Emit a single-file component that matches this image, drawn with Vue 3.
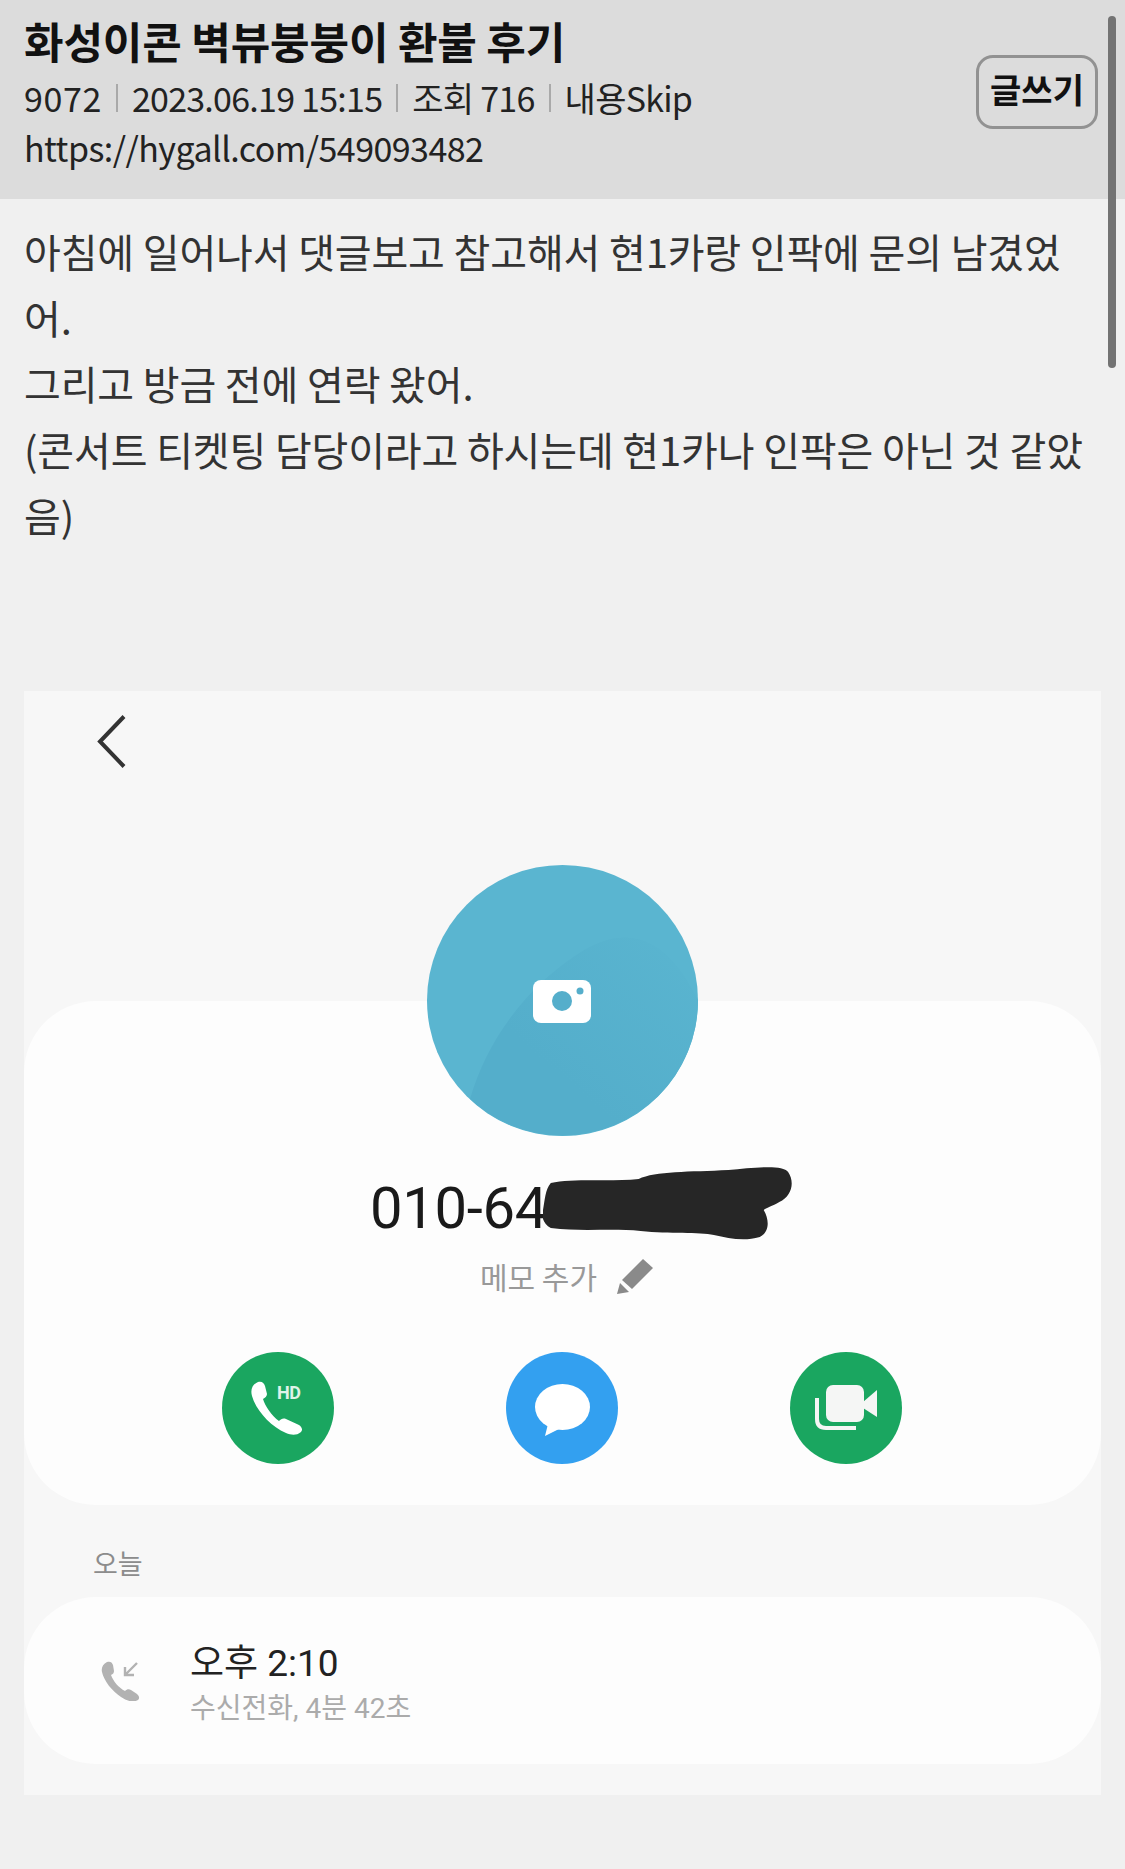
<script setup>
const metaItems = ['9072', '2023.06.19 15:15', '조회 716', '내용Skip']
</script>

<template>
  <div class="page">
    <header class="head">
      <div class="head-text">
        <h1 class="title">화성이콘 벽뷰붕붕이 환불 후기</h1>
        <div class="meta">
          <template v-for="(m, i) in metaItems" :key="m">
            <i v-if="i" class="sep"></i><span>{{ m }}</span>
          </template>
        </div>
        <div class="url">https://hygall.com/549093482</div>
      </div>
      <button class="write">글쓰기</button>
    </header>
    <div class="thumb"></div>

    <article class="body">
      <p>아침에 일어나서 댓글보고 참고해서 현1카랑 인팍에 문의 남겼었어.</p>
      <p>그리고 방금 전에 연락 왔어.</p>
      <p>(콘서트 티켓팅 담당이라고 하시는데 현1카나 인팍은 아닌 것 같았음)</p>
    </article>

    <section class="screen">
      <svg class="back" width="30" height="53" viewBox="0 0 30 53"><path d="M27 1.5 3 26.5 27 51.5" fill="none" stroke="#333" stroke-width="4"/></svg>
      <div class="avatar">
        <svg width="271" height="271" viewBox="0 0 271 271">
          <defs>
            <linearGradient id="swoop" x1="0" y1="1" x2="1" y2="0">
              <stop offset="0.35" stop-color="#54aecb"/>
              <stop offset="1" stop-color="#5ab5d0"/>
            </linearGradient>
          </defs>
          <circle cx="135.5" cy="135.5" r="135.5" fill="#5ab5d0"/>
          <path d="M43 234C60 175 100 120 157 85C200 60 240 70 271 135.5A135.5 135.5 0 0 1 43 234Z" fill="url(#swoop)"/>
          <rect x="106" y="115" width="58" height="43" rx="8" fill="#fff"/>
          <circle cx="135" cy="136" r="10" fill="#55aecb"/>
          <circle cx="153" cy="126" r="3.5" fill="#55aecb"/>
        </svg>
      </div>
      <div class="card main">
        <div class="number">
          <span class="digits">010-64</span>
          <svg class="blot" width="250" height="76" viewBox="0 0 256 76" preserveAspectRatio="none"><path d="M8 17C30 12 70 16 98 13C115 5 150 6 190 4C215 2 245-2 251 6C258 16 255 30 242 36C235 40 228 42 226 44C232 54 232 66 222 71C205 76 190 72 175 69C160 66 130 68 100 65C70 62 40 66 8 62C0 58-2 50 0 44C2 34 2 24 8 17Z" fill="#262626"/></svg>
        </div>
        <div class="memo">
          <span>메모 추가</span>
          <svg width="37" height="36" viewBox="0 0 37 36"><path d="M26 1 36 10 15 31 5 22Z" fill="#8a8a8a"/><path d="M3 25 12 34 0 36Z" fill="#8a8a8a"/></svg>
        </div>
        <div class="actions">
          <div class="action green">
            <svg width="112" height="112" viewBox="0 0 112 112">
              <path d="M36 30C40 29 42 31 43 34L45 42C45 44 43 46 41 47C43 54 50 64 57 69C59 67 61 66 64 67L77 73C80 75 81 78 79 80C74 84 69 83 64 81C48 74 34 58 30 44C28 37 31 32 36 30Z" fill="#fff"/>
              <text x="55" y="47" class="hd">HD</text>
            </svg>
          </div>
          <div class="action blue">
            <svg width="112" height="112" viewBox="0 0 112 112">
              <ellipse cx="56.5" cy="55" rx="27.5" ry="23" fill="#fff"/>
              <path d="M42 72 39 84 53 77Z" fill="#fff"/>
            </svg>
          </div>
          <div class="action green">
            <svg width="112" height="112" viewBox="0 0 112 112">
              <rect x="36" y="33" width="38" height="37" rx="7" fill="#f5f6f5"/>
              <path d="M73 50 87 38V65L73 56Z" fill="#f5f6f5"/>
              <path d="M27 46V67Q27 76 36 76H66" fill="none" stroke="#f5f6f5" stroke-width="4"/>
            </svg>
          </div>
        </div>
      </div>
      <div class="day">오늘</div>
      <div class="card log">
        <svg class="log-icon" width="40" height="40" viewBox="0 0 40 40">
          <path d="M6 1C9 0 11 1 12 4L13 10C13 12 12 13 10 14C12 20 18 27 24 30C26 28 28 28 30 29L36 33C38 35 39 37 37 39C32 42 26 40 20 36C11 30 3 20 1 11C0 7 2 3 6 1Z" fill="#b2b2b2"/>
          <path d="M36 2 24 14M24 6V14H33" fill="none" stroke="#b2b2b2" stroke-width="2.4"/>
        </svg>
        <div class="log-text">
          <div class="time">오후 2:10</div>
          <div class="dur">수신전화, 4분 42초</div>
        </div>
      </div>
    </section>
  </div>
</template>

<style>
html, body { margin: 0; background: #f0f0f0; }
</style>

<style scoped>
.page {
  position: relative;
  width: 1125px;
  height: 1869px;
  overflow: hidden;
  background: #f0f0f0;
  font-family: "Noto Sans CJK KR", "Noto Sans", sans-serif;
}
.head {
  height: 199px;
  box-sizing: border-box;
  background: #dcdcdc;
  padding: 11px 27px 0 24px;
  display: flex;
  justify-content: space-between;
  align-items: flex-start;
}
.title {
  margin: 0;
  font-size: 43px;
  line-height: 58px;
  font-weight: 700;
  letter-spacing: -0.15px;
  color: #111;
}
.meta, .url {
  font-size: 34px;
  line-height: 50px;
  color: #222;
  font-weight: 400;
}
.url { letter-spacing: -0.55px; }
.meta {
  display: flex;
  align-items: center;
  margin-top: 4px;
  letter-spacing: -0.75px;
}
.meta span:first-of-type { letter-spacing: 0.6px; }
.sep {
  width: 2px;
  height: 28px;
  background: #a9a9a9;
  margin: 0 14px;
}
.write {
  margin-top: 44px;
  width: 122px;
  height: 74px;
  box-sizing: border-box;
  border: 3px solid #929292;
  border-radius: 17px;
  background: transparent;
  padding: 0 0 7px;
  font: 700 34px "Noto Sans CJK KR", sans-serif;
  color: #111;
}
.thumb {
  position: absolute;
  top: 16px;
  right: 9px;
  width: 8px;
  height: 352px;
  border-radius: 4px;
  background: #737373;
}
.body {
  padding: 19px 35px 0 24px;
  height: 472px;
  box-sizing: border-box;
}
.body p {
  margin: 0;
  font-size: 40px;
  line-height: 66px;
  letter-spacing: -0.15px;
  color: #333;
}
.screen {
  margin: 20px 24px 0;
  width: 1077px;
  background: #f7f7f7;
  display: flex;
  flex-direction: column;
  padding: 24px 0 31px;
  box-sizing: border-box;
}
.back {
  margin-left: 73px;
  display: block;
}
.avatar {
  align-self: center;
  width: 271px;
  height: 271px;
  margin-top: 97px;
  margin-bottom: -135px;
  position: relative;
  z-index: 1;
}
.avatar svg { display: block; }
.card {
  background: #fdfdfd;
  border-radius: 72px;
}
.main {
  height: 504px;
  box-sizing: border-box;
  padding-top: 164px;
  display: flex;
  flex-direction: column;
  align-items: center;
}
.number {
  height: 76px;
  display: flex;
  align-items: center;
  font-family: Roboto, sans-serif;
  font-size: 58px;
  letter-spacing: -0.3px;
  color: #1a1a1a;
  margin-left: 38px;
}
.digits { padding-top: 10px; }
.blot {
  margin-left: -4px;
  margin-top: 2px;
}
.memo {
  display: flex;
  align-items: center;
  gap: 20px;
  margin-top: 17px;
  font-size: 30px;
  line-height: 36px;
  color: #999;
  margin-left: 9px;
}
.actions {
  display: flex;
  gap: 172px;
  margin-top: 58px;
  margin-left: -2px;
}
.action {
  width: 112px;
  height: 112px;
  border-radius: 50%;
}
.action svg { display: block; }
.green { background: #1aa660; }
.blue { background: #33a0f0; }
.hd {
  font: 700 18px Roboto, sans-serif;
  letter-spacing: -0.5px;
  fill: #dff3e8;
}
.day {
  height: 92px;
  padding: 42px 0 0 69px;
  box-sizing: border-box;
  font-size: 27px;
  line-height: 32px;
  color: #8c8c8c;
}
.log {
  height: 167px;
  display: flex;
  align-items: center;
  padding-left: 77px;
  gap: 49px;
}
.log-text { padding-top: 6px; }
.time {
  font-family: Roboto, "Noto Sans CJK KR", sans-serif;
  font-size: 37px;
  line-height: 44px;
  color: #222;
}
.dur {
  font-family: Roboto, "Noto Sans CJK KR", sans-serif;
  font-size: 28px;
  line-height: 34px;
  color: #ababab;
  margin-top: 6px;
}
</style>
